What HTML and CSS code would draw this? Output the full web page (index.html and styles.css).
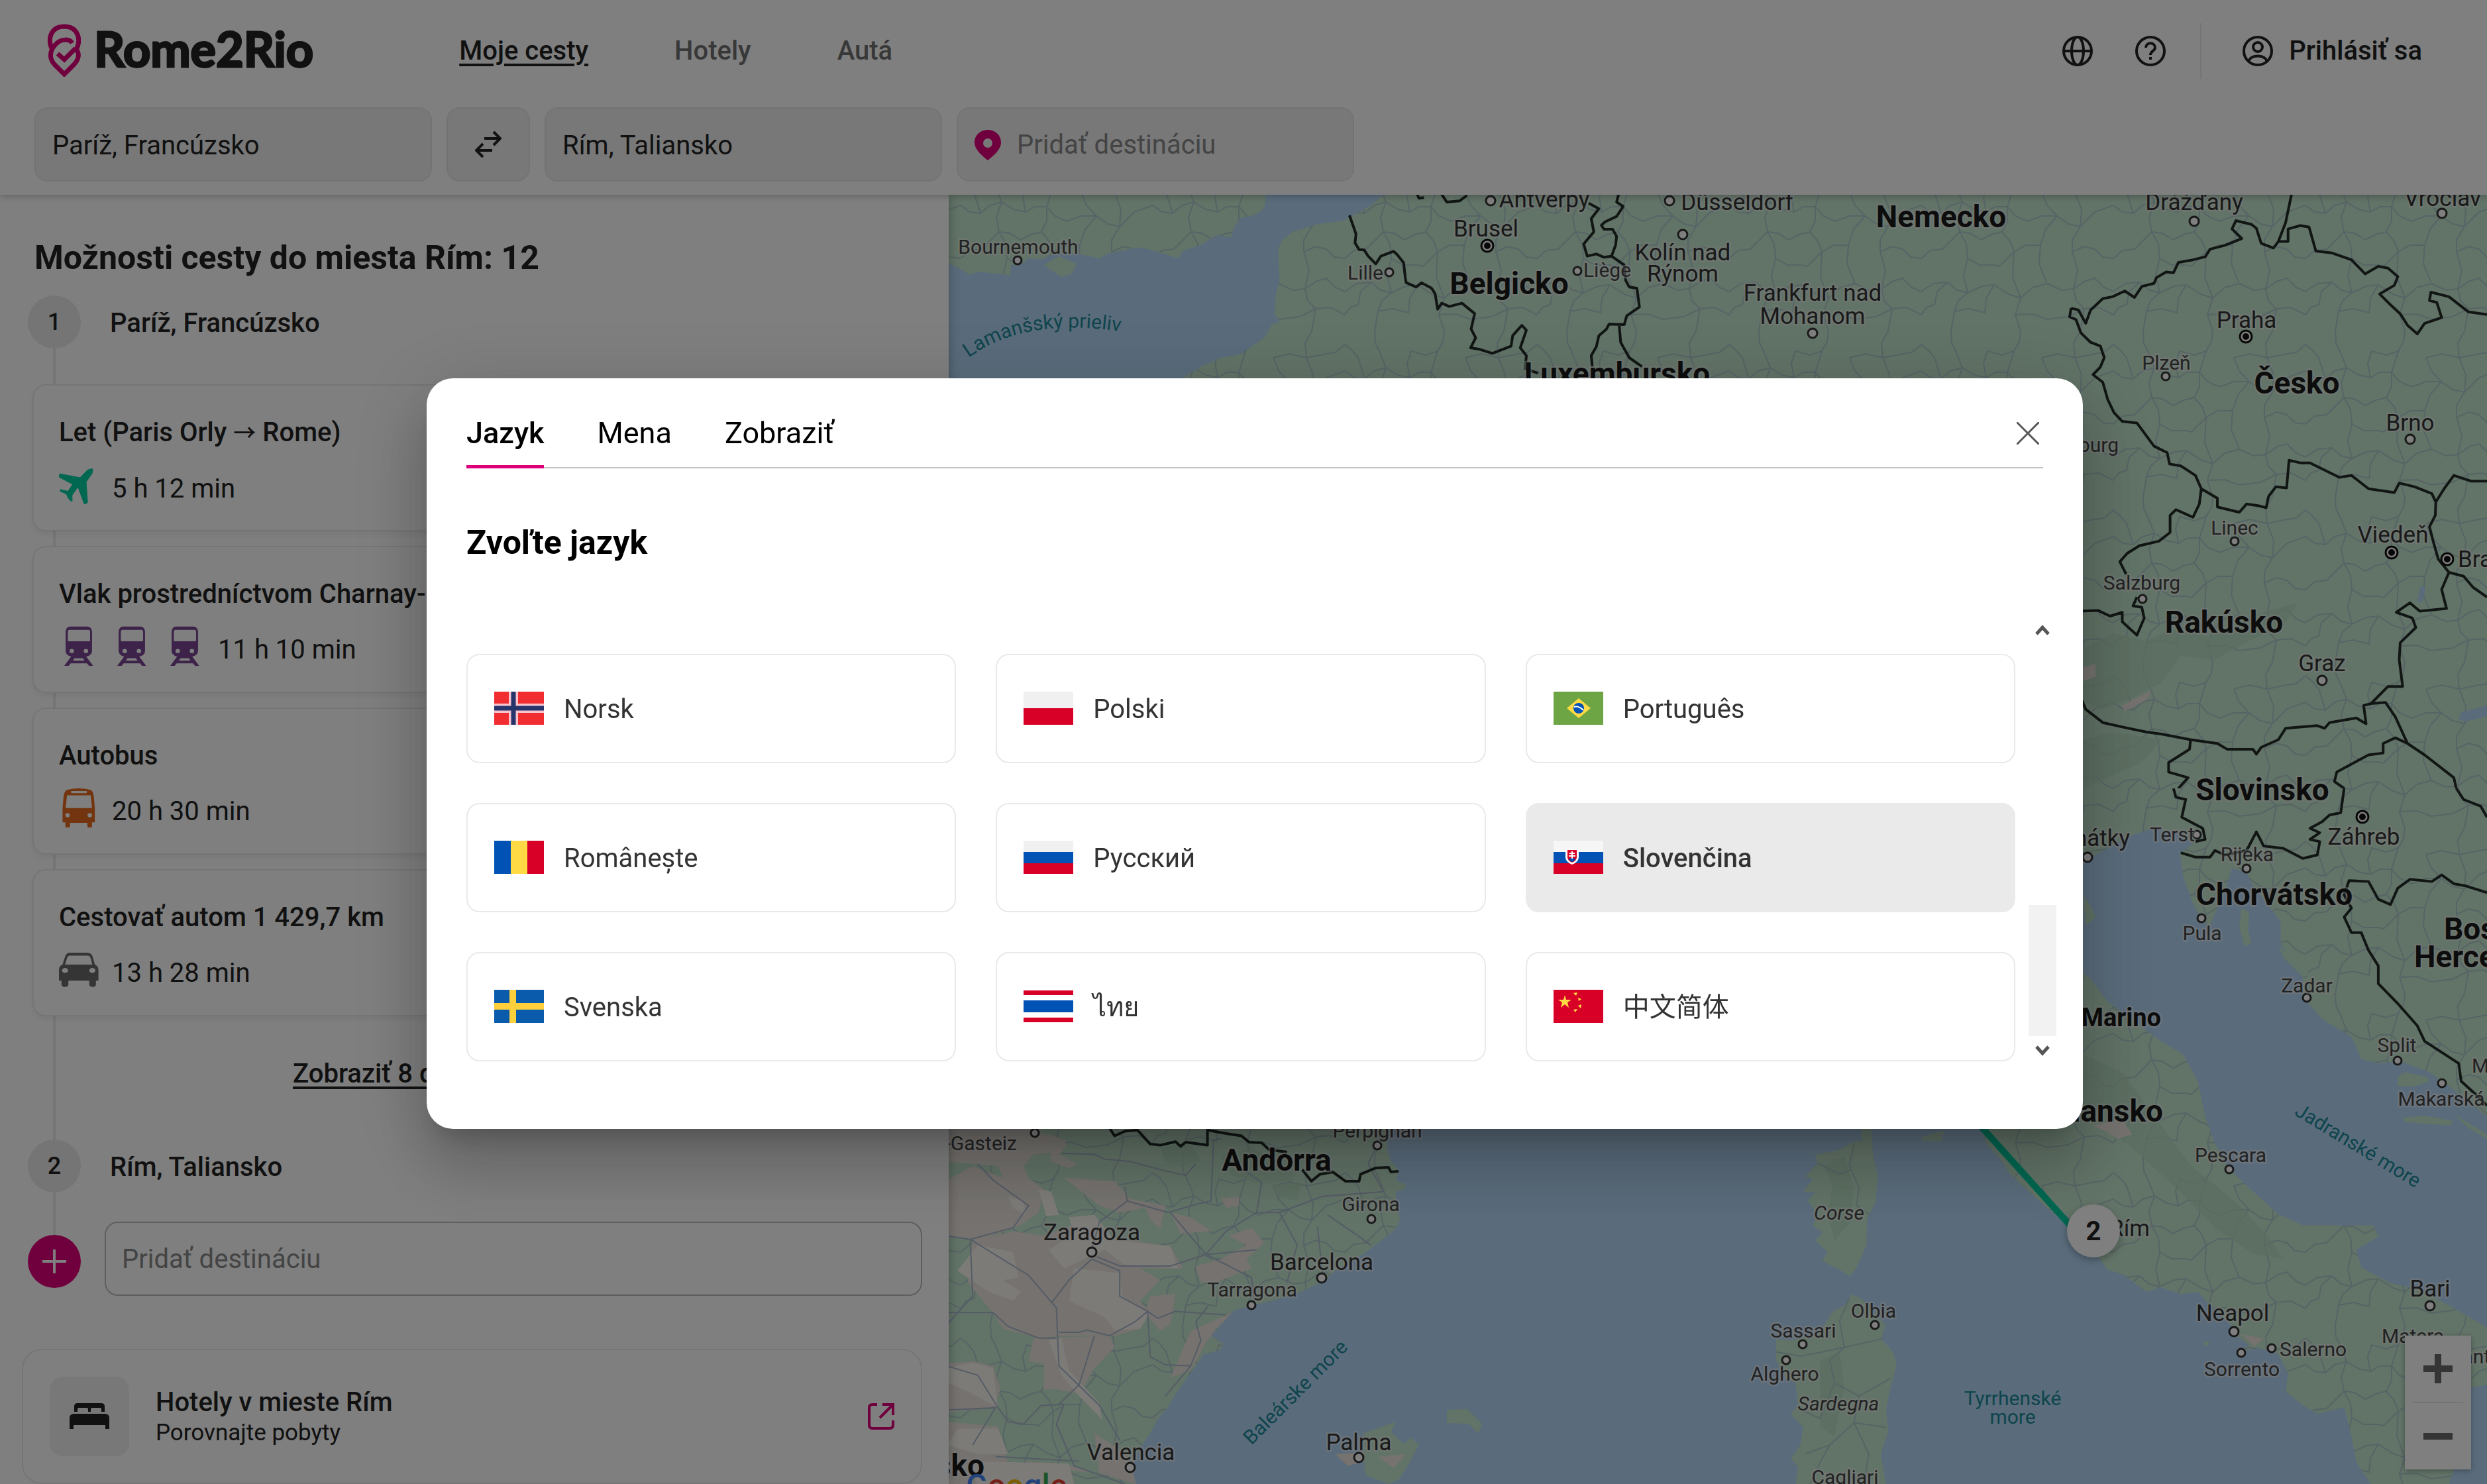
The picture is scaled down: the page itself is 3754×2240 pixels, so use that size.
FILE: index.html
```html
<!DOCTYPE html>
<html lang="sk">
<head>
<meta charset="utf-8">
<title>Rome2Rio</title>
<meta name="viewport" content="width=device-width, initial-scale=1">
<link rel="stylesheet" href="styles.css">
</head>
<body>
<svg class="sprite" aria-hidden="true">
  <symbol id="train" viewBox="214 604 143 94" preserveAspectRatio="none">
    <path fill-rule="evenodd" d="M252 605H318Q332 606 333 618V664Q331 674 312 676L337 698H322L315 692H256L249 698H233L258 676Q240 674 238 664V618Q239 606 252 605ZM250 613Q246 614 246 618V638Q246 640 250 640H322Q326 640 326 638V618Q326 614 322 613ZM260 658A8 5 0 1 0 260 668A8 5 0 1 0 260 658ZM311 658A8 5 0 1 0 311 668A8 5 0 1 0 311 658ZM270 680L264 686H306L300 680Z"/>
  </symbol>
</svg>

<div class="app">
  <header class="header">
    <div class="topbar">
      <a class="logo" href="#" aria-label="Rome2Rio">
        <svg width="50" height="80" viewBox="0 0 50 80" fill="none" stroke="currentColor" stroke-width="7">
          <path d="M7 39C-1 24 4 4 25 4S51 24 43 39"/>
          <path d="M37 29C33 22 21 23 14 29C2 40 2 52 10 61L25 76L40 61C48 52 48 45 43 38"/>
          <path d="M15 45L25 54L42 37"/>
        </svg>
        <span class="wordmark">Rome2Rio</span>
      </a>
      <nav class="nav">
        <a class="active" href="#">Moje cesty</a>
        <a href="#">Hotely</a>
        <a href="#">Autá</a>
      </nav>
      <div class="account">
        <button class="icon-btn" aria-label="Jazyk a mena">
          <svg width="46" height="46" viewBox="0 0 46 46" fill="none" stroke="currentColor" stroke-width="4"><circle cx="23" cy="23" r="21"/><ellipse cx="23" cy="23" rx="9" ry="21"/><path d="M2 23H44"/></svg>
        </button>
        <button class="icon-btn help" aria-label="Pomoc">
          <svg width="46" height="46" viewBox="0 0 46 46" fill="none" stroke="currentColor" stroke-width="4"><circle cx="23" cy="23" r="21"/><path d="M16 18C16 9 30 9 30 18C30 23 23 23 23 29M23 32V36"/></svg>
        </button>
        <button class="login">
          <svg width="46" height="46" viewBox="0 0 46 46" fill="none" stroke="currentColor" stroke-width="4"><circle cx="23" cy="23" r="21"/><circle cx="23" cy="17" r="7"/><path d="M9 38C14 28 32 28 37 38"/></svg>
          <span>Prihlásiť sa</span>
        </button>
      </div>
    </div>
    <form class="search">
      <input class="field" type="text" value="Paríž, Francúzsko" aria-label="Odkiaľ">
      <button class="swap" type="button" aria-label="Vymeniť">
        <svg width="40" height="40" viewBox="0 0 40 40" fill="none" stroke="currentColor" stroke-width="4"><path d="M14 11H37M28 1L38 11L28 21M26 29H3M12 19L2 29L12 39"/></svg>
      </button>
      <input class="field" type="text" value="Rím, Taliansko" aria-label="Kam">
      <label class="field with-pin">
        <svg width="40" height="46" viewBox="0 0 40 46"><path fill-rule="evenodd" d="M20 0C8 0 0 9 0 19C0 29 9 37 20 46C31 37 40 29 40 19C40 9 32 0 20 0ZM20 13A7 7 0 1 1 20 27A7 7 0 1 1 20 13Z" fill="currentColor"/></svg>
        <input type="text" placeholder="Pridať destináciu" aria-label="Pridať destináciu">
      </label>
    </form>
  </header>

  <main class="main">
    <section class="panel">
      <h1>Možnosti cesty do miesta Rím: 12</h1>
      <div class="timeline">
        <div class="stop"><span class="badge">1</span><span class="place">Paríž, Francúzsko</span></div>
        <div class="routes">
          <article class="route">
            <h2>Let (Paris Orly <span class="arrow">→</span> Rome)</h2>
            <div class="meta">
              <svg class="plane" viewBox="214 221 143 94" preserveAspectRatio="none"><path d="M336 230C330 228 320 230 312 235L290 250L218 241Q213 243 214 250L262 267L246 282L219 278L216 283L240 290L245 298L258 308L263 305L262 293L282 274L303 312Q310 316 318 309L313 261L330 245Q339 237 336 230Z"/></svg>
              <span>5 h 12 min</span>
            </div>
          </article>
          <article class="route">
            <h2>Vlak prostredníctvom Charnay-lès-Mâcon</h2>
            <div class="meta">
              <svg class="train"><use href="#train"/></svg>
              <svg class="train"><use href="#train"/></svg>
              <svg class="train"><use href="#train"/></svg>
              <span>11 h 10 min</span>
            </div>
          </article>
          <article class="route">
            <h2>Autobus</h2>
            <div class="meta">
              <svg class="bus" viewBox="214 986 143 94" preserveAspectRatio="none"><path fill-rule="evenodd" d="M243 991Q284 984 328 991Q338 994 340 1010L343 1035V1068H333V1077Q332 1081 325 1081Q316 1081 316 1077V1069H254V1077Q253 1081 246 1081Q237 1081 237 1077V1068H227V1035L230 1010Q232 994 243 991ZM258 994V999H314V994ZM243 1004L238 1034H333L328 1004ZM245 1046A8 5 0 1 0 245 1056A8 5 0 1 0 245 1046ZM325 1046A8 5 0 1 0 325 1056A8 5 0 1 0 325 1046Z"/></svg>
              <span>20 h 30 min</span>
            </div>
          </article>
          <article class="route">
            <h2>Cestovať autom 1 429,7 km</h2>
            <div class="meta">
              <svg class="car" viewBox="214 1369 143 94" preserveAspectRatio="none"><path fill-rule="evenodd" d="M250 1377H318Q332 1378 336 1388L343 1405Q356 1408 356 1418V1443H347V1452Q346 1458 336 1458Q324 1458 323 1452V1443H248V1452Q247 1458 236 1458Q224 1458 223 1452V1443H214V1418Q214 1408 227 1405L235 1388Q240 1378 250 1377ZM252 1384Q246 1384 243 1390L236 1405H334L328 1390Q325 1384 318 1384ZM236 1413A11 6 0 1 0 236 1425A11 6 0 1 0 236 1413ZM334 1413A11 6 0 1 0 334 1425A11 6 0 1 0 334 1413Z"/></svg>
              <span>13 h 28 min</span>
            </div>
          </article>
        </div>
        <a class="more" href="#">Zobraziť 8 ďalších možností</a>
        <div class="stop"><span class="badge">2</span><span class="place">Rím, Taliansko</span></div>
        <div class="add">
          <button class="plus" aria-label="Pridať">
            <svg width="36" height="36" viewBox="0 0 36 36" stroke="currentColor" stroke-width="4"><path d="M18 0V36M0 18H36"/></svg>
          </button>
          <input type="text" placeholder="Pridať destináciu" aria-label="Pridať destináciu">
        </div>
      </div>
      <a class="hotel" href="#">
        <span class="tile">
          <svg width="60" height="40" viewBox="0 0 60 40" fill="currentColor"><path d="M7 13V5Q7 0 12 0H48Q53 0 53 5V13H48V9Q48 7 46 7H34Q32 7 32 9V13H28V9Q28 7 26 7H14Q12 7 12 9V13ZM6 16H54Q60 17 60 22V39H54V33H6V39H0V22Q0 17 6 16Z"/></svg>
        </span>
        <span class="hotel-text"><strong>Hotely v mieste Rím</strong><small>Porovnajte pobyty</small></span>
        <svg class="ext" width="40" height="40" viewBox="0 0 40 40" fill="none" stroke="currentColor" stroke-width="4"><path d="M14 2H7Q2 2 2 7V33Q2 38 7 38H33Q38 38 38 33V26M22 2H38V18M38 2L18 22"/></svg>
      </a>
    </section>

    <section class="map" aria-label="Mapa">
      <svg class="map-canvas" viewBox="1432 294 2322 1946" preserveAspectRatio="xMinYMin slice">
        <defs>
          <pattern id="roads" width="290" height="250" patternUnits="userSpaceOnUse">
            <path class="road" d="M0 60L14 70L30 72L44 60L62 55L80 66L98 70L112 62L130 62L142 76L160 84L182 76L205 76L222 88L240 92L262 70L290 60M0 190L18 178L40 176L54 188L70 192L92 182L110 180L132 194L150 200L168 184L190 178L212 188L230 186L248 174L262 170L276 184L290 190M45 0L46 18L52 30L62 55L54 78L58 100L68 118L70 140L64 166L70 192L56 204L50 220L45 250M130 62L130 84L122 100L134 114L140 130L138 168L150 200L142 225L150 250M150 0L148 16L140 30L130 62M240 0L230 18L232 40L242 66L240 92L228 112L228 130L236 158L230 186L234 204L246 216L240 250M58 100L74 102L90 112L106 104L122 100M140 130L158 120L180 120L188 96L205 76M140 130L118 152L110 150L88 150L70 140M228 130L246 122L262 126L274 138L290 140M0 140L14 128L32 126L48 110L58 100M180 120L178 148L190 178M98 70L94 48L100 30L122 36L140 30M182 40L190 60L205 76M182 40L206 34L232 40M110 180L98 200L96 222L72 216L50 220M142 225L168 224L190 232L222 228L246 216M0 20L10 28L20 40L30 72M290 20L276 32L262 34L232 40M0 225L8 214L20 210L24 190L40 176M290 225L268 214L246 216"/>
          </pattern>
        </defs>
        <rect class="land" x="1432" y="294" width="2322" height="1946"/>
        <rect fill="url(#roads)" x="1432" y="294" width="2322" height="1946"/>

        <!-- Channel, Belgium, Luxembourg -->
        <svg x="1430" y="290" width="1200" height="290" viewBox="0 0 1568 870" preserveAspectRatio="none">
          <path class="sea" d="M627 0H866L835 60L800 105L780 130L730 145L680 180L660 220L652 260L655 400L648 460L645 550L655 585L640 600L625 660L600 700L575 735L540 750L500 790L465 840L460 870H0V320L20 340L45 375L60 360L100 370L125 378V330L145 330L160 300L185 305L200 290L220 280L260 280L300 300L315 280L375 250L400 260L455 300L465 265L500 240L530 195L560 205L565 160L580 115L600 110L620 85L627 60Z"/>
          <path class="land" d="M190 330L220 290L255 325L245 370L225 385Z"/>
          <path class="border" d="M793 105L800 150L806 190L804 230L812 260L822 262L830 290L845 325L855 290L880 268L888 285L900 320L903 385L905 410L925 430L935 410L955 435L962 460L967 530L975 503L990 518L1015 503L1040 550L1033 620L1042 660L1032 705L1050 712L1075 730L1112 697L1115 650L1133 603L1142 625L1130 705L1142 740L1140 800L1165 820M925 0L930 28L940 25M975 10L985 45L1010 40L1025 15M1265 50L1285 75L1270 120L1275 180L1255 235L1262 290L1280 280L1295 295L1310 290L1335 330L1338 400L1345 430L1360 435L1365 520L1340 560L1335 600L1305 598L1300 620L1285 650L1280 700L1270 740L1272 790M1325 600L1328 680L1345 750L1370 790M1325 0L1320 45L1333 65L1320 110L1297 135L1290 150L1295 168L1312 168L1320 200L1318 240L1310 290"/>
        </svg>

        <!-- Czechia, Austria -->
        <svg x="2600" y="290" width="1154" height="900" viewBox="0 0 1568 1568" preserveAspectRatio="none">
          <path class="hill" d="M740 1200L800 1160L870 1180L920 1150L1000 1170L1060 1130L1120 1100L1180 1080L1150 1140L1080 1180L1010 1230L940 1220L900 1290L840 1330L780 1360L740 1340ZM740 1440L800 1420L900 1440L860 1500L740 1568Z"/>
          <path class="sand" d="M740 1250L765 1240V1275L740 1285ZM820 1350L880 1310L870 1335L825 1365Z"/>
          <path class="sea" d="M1510 1385L1515 1368L1568 1350V1378L1525 1392ZM1432 1035L1442 1040L1435 1080L1425 1075Z"/>
          <path class="border" d="M1168 0L1155 80L1140 130M715 305L730 310L745 345L755 310L780 280L800 275L825 260L845 277L860 248L885 240L890 225L910 210L925 212L935 185L965 178L990 170L1000 150L1030 140L1065 122L1045 97L1053 75L1085 85L1095 95L1105 135L1130 147L1140 130L1160 130L1160 97L1185 88L1203 92L1217 155L1250 160L1290 178L1318 215L1345 195L1365 200L1385 222L1378 245L1348 268L1365 290L1390 320L1405 350L1425 373L1440 345L1475 330L1465 290L1450 285L1453 263L1490 275L1530 315L1568 322M715 305L712 328L725 335L735 370L755 395L775 405L783 435L775 460L760 480L780 500L790 545L803 580L820 603L850 607L885 668L912 685L917 715L940 720L970 745L982 780L1015 805L1015 828L1060 842L1075 820L1100 825L1115 830L1120 800L1135 775L1157 778L1162 705L1185 712L1205 712L1265 750L1290 745L1325 780L1378 790L1388 765L1420 775L1455 793L1463 815L1480 780L1500 745L1535 760L1568 760M1463 815L1462 850L1450 880L1458 920L1468 965L1490 1000L1520 1010L1540 1040L1568 1065M1490 1000L1475 1045L1485 1095L1430 1102L1410 1080L1382 1105L1415 1120L1422 1145L1390 1185L1388 1230L1395 1300L1365 1300L1330 1345L1360 1342L1380 1380L1405 1450L1440 1480L1500 1540L1505 1568M1330 1345L1315 1350L1320 1398L1300 1383L1245 1395L1235 1410L1220 1403L1155 1410L1140 1440L1105 1460L1095 1478L1088 1465L1035 1465L1015 1450L960 1440L900 1425L870 1420L825 1408L780 1395L745 1360L735 1330M982 780L978 820L965 855L930 835L918 850V895L895 918L855 930L830 950L815 972L828 1005M850 1065L842 1088L860 1092L865 1120L850 1165L820 1130V1105L795 1115L770 1100L730 1102M960 1440L958 1465L915 1500V1525L955 1540L935 1568M1405 1450L1380 1435L1355 1450V1475L1325 1480L1260 1525L1255 1550L1275 1568"/>
        </svg>

        <!-- Italy, Adriatic, Sardinia, Corsica -->
        <svg x="2600" y="1190" width="1154" height="1050" viewBox="0 0 1568 1568" preserveAspectRatio="none">
          <path class="hill" d="M740 600L820 640L900 760L960 850L1050 930L1120 1010L1150 1060L1090 1050L1010 990L930 900L850 820L780 760L740 740Z"/>
          <path class="sand" d="M760 760L820 745L840 780L810 790L790 775ZM1065 1230L1110 1240L1090 1258Z"/>
          <path class="sea" d="M700 190L740 170L765 150L790 135L830 110L880 90L940 100L965 125L938 145L945 200L965 260L985 300L1000 310L1015 270L1030 230L1045 180L1075 190L1085 215L1110 250L1145 300V350L1165 385L1190 420V470L1230 520L1290 560L1310 610L1345 620L1390 615L1450 640L1500 680L1568 740V1215L1490 1165L1430 1130L1370 1115L1310 1080L1300 1040L1345 1010L1335 985L1290 985H1190L1140 960L1110 930L1060 880L1035 850L1010 800L990 740L975 660L945 600L900 570L850 530L790 480L755 430L700 380ZM0 700H500L530 768L540 800L570 835L590 870L620 900L670 950L710 985L760 1040L790 1085L820 1095L870 1135L900 1125L940 1140L975 1135L1000 1165L1040 1205L1050 1230L1080 1255L1060 1270L1100 1262L1140 1275L1160 1320L1155 1360L1190 1390L1220 1410L1275 1395L1290 1460L1300 1520L1330 1568H0ZM1568 1345L1500 1355L1480 1400L1535 1480L1500 1535L1490 1568H1568Z"/>
          <path class="land" d="M285 760H305L308 820L318 870L315 930L297 970L295 1030L275 1080L262 1100L240 1085L205 1065L215 1045L190 1020L205 1000L185 985L195 960L175 930L190 910L165 910L185 880L170 875L195 845L190 825L240 815L270 795L285 795ZM265 1140L285 1150L310 1180L335 1210L325 1240L350 1270L357 1300L345 1350L335 1400L340 1450L325 1500L335 1568H150L155 1530L140 1510L160 1480L165 1440L140 1410L155 1390L150 1340L130 1330L110 1290V1240L140 1245L200 1225L225 1180L250 1165ZM410 785L455 770L450 795L410 795ZM1385 650L1400 640L1445 650L1450 660L1420 672L1385 670ZM1395 742L1440 738L1500 750L1490 760L1400 752ZM1065 270L1080 280L1078 320L1085 350L1070 355L1060 310ZM1140 355L1180 390L1205 420L1190 425L1150 380ZM740 240L755 265L765 290L745 310ZM985 1248L998 1246L996 1256L988 1256ZM1500 735L1568 780V790L1530 765Z"/>
          <path class="hill" d="M210 850L250 830L270 900L260 980L230 1020L215 960L225 900ZM200 1290L240 1270L250 1350L230 1460L200 1440Z"/>
          <path class="road" d="M270 800L260 850L280 900L275 940L300 960M195 845L240 870L262 860M260 1150L240 1200L250 1260L220 1290L230 1340L280 1370L270 1430L300 1500L290 1568M110 1270L160 1280L250 1260L330 1240M160 1400L200 1420L230 1340M170 1500L220 1480L270 1430L335 1440M345 1330L280 1370M180 1568L200 1520L220 1480"/>
          <path class="border" d="M925 0L930 20L950 25L942 65L985 90L990 115L970 120M940 145L970 155L1000 155L1010 140L1030 150L1075 140L1095 98L1110 130L1150 135L1190 158L1220 150L1225 120L1205 115L1225 100L1205 90L1230 75L1245 60L1268 55L1275 0M1505 0L1520 25L1555 40L1568 65M1568 235L1525 220L1500 215L1475 195L1455 210L1410 205L1385 225L1370 262L1345 250L1325 210L1285 208L1275 240L1290 270L1275 290L1290 325L1310 325L1325 365L1345 400V440L1385 485L1425 535L1440 570L1510 620L1515 660L1545 690L1568 715"/>
        </svg>

        <!-- Spain, Balearics -->
        <svg x="1430" y="1690" width="1200" height="550" viewBox="0 0 1568 1568" preserveAspectRatio="none">
          <path class="sand" d="M0 40H160L235 90L225 140L170 150L150 200L160 250L190 300L180 400L140 460L60 520L0 500V260L50 200L110 250L100 200L0 180ZM200 60L235 110L220 150L255 190L240 210L205 180ZM230 250L330 265L360 340L430 370L420 470L400 430L390 380L340 400L300 370ZM50 520L130 480L190 500L290 420L300 500L440 545L465 640L380 640L420 690L380 780L400 830L380 900L330 930L230 930L180 940L110 900L90 830L40 700ZM170 940L320 930L330 980L290 1070L260 1180L215 1160H190V1050L160 1040ZM0 1050L50 1040L90 1060L105 1160L90 1240L0 1260ZM0 1300L100 1320L110 1400L130 1568H0ZM490 630L540 600L590 540L555 500L600 465L625 530L590 600L600 640L530 700H500ZM570 820L530 900L510 960L480 1080L440 1110L480 910ZM290 1350L340 1420L370 1470L372 1568L300 1520ZM400 760L450 750L440 880L420 910L390 830ZM440 400L480 420L520 480L460 490ZM540 340L575 330V370L550 380ZM150 1470L230 1480L290 1520L200 1500Z"/>
          <path class="sand-light" d="M240 420L290 410L330 520L440 545L455 640L350 625L310 560L230 640L200 560L250 490ZM60 540L130 570L140 680L110 690L145 740L130 780L80 740L20 650ZM250 640L340 660L345 760L400 830L380 900L330 905L310 850L240 780ZM180 300L205 310L220 410L195 415ZM120 330L150 350L155 410L130 380ZM0 1070L50 1045L90 1070L100 1240L50 1180L0 1130ZM200 950L225 940L240 1080L300 1220L305 1290L260 1190L225 1100ZM20 1330L100 1330L120 1440L60 1440L0 1400ZM40 1470L240 1480L250 1568H60Z"/>
          <path class="hill" d="M420 120L480 100L500 180L460 200L430 180ZM540 160L600 120L640 170L700 180L680 260L620 280L560 240ZM640 280L700 270L690 350L650 330Z"/>
          <path class="road strong" d="M0 500L45 515L130 465L160 370L90 260L60 190M45 515L160 670L215 810L220 1060L300 1230L340 1380M45 515L50 760L0 880M285 600L340 650V760L395 825L400 1020L430 1055L480 1060M285 600L240 690L205 790M295 590L340 630H440L510 580L610 560M355 350L435 400L490 365L520 350L525 90L540 80M355 350L300 440L285 560M355 350L350 290M225 145L290 150L310 170L360 180L420 215L470 240L490 190M510 580L440 400M510 580L600 680L605 780M510 580L550 480L610 400L620 270L560 180M395 825L415 855L450 825L550 840M220 915H260L275 905L320 930L370 870L395 825M0 830H90L120 890L180 940H215M0 1060L60 1100L100 1240L120 1300L150 1310L185 1230L230 1225M230 1225L215 1310L250 1490L350 1568M0 1250L95 1240L50 1400M95 1450L260 1470M610 400H655L740 330L860 310M655 400L690 540L670 700M860 310L830 190L845 120M730 460L740 660M750 410L810 500L835 540M290 930L260 1140L220 1225M515 800L490 870L500 950L480 1060L430 1190"/>
          <path class="sea" d="M868 0V130L875 180L890 215L885 260L905 280L900 300L885 310V360L893 430L885 470L850 530L820 580L770 640L745 690L700 740L640 780L600 800L565 820L545 870L520 930L545 965L540 990L505 1010L490 1060L470 1120L445 1200L435 1240L415 1290L400 1350L375 1430L365 1500L372 1568H1568V0Z"/>
          <path class="land" d="M820 1440V1350L885 1300L875 1345L900 1395L915 1370L930 1400L905 1500L890 1550L870 1568L825 1530ZM985 1250L1025 1245L1055 1310L1047 1350L1030 1310L985 1305Z"/>
          <path class="sand" d="M765 1440L822 1430V1470L790 1490ZM850 1450L905 1440L880 1500Z"/>
          <path class="border" d="M315 20L330 70L350 50L375 45L400 105L420 110L450 95L460 115L470 97L513 110V45L550 60L580 70L595 97L620 100L635 130L670 140M700 215L718 265L735 235L760 225L785 265H812L815 235L845 208L870 205L875 225L890 222"/>
        </svg>

        <path class="flight" d="M2990 1700L3134 1860"/>

        <g class="dots">
          <circle cx="1536" cy="393" r="6"/><circle cx="2250" cy="303" r="7"/><circle cx="2520" cy="303" r="7"/><circle cx="2097" cy="411" r="6"/><circle cx="2381" cy="409" r="6"/><circle cx="2540" cy="354" r="7"/><circle cx="2736" cy="503" r="7"/><circle cx="3312" cy="334" r="7"/><circle cx="3686" cy="322" r="7"/><circle cx="3269" cy="568" r="6"/><circle cx="3638" cy="663" r="7"/><circle cx="3373" cy="817" r="6"/><circle cx="3234" cy="904" r="6"/><circle cx="3505" cy="1027" r="7"/><circle cx="3151" cy="1294" r="7"/><circle cx="3316" cy="1260" r="6"/><circle cx="3391" cy="1311" r="6"/><circle cx="3323" cy="1386" r="6"/><circle cx="3482" cy="1506" r="6"/><circle cx="3619" cy="1601" r="6"/><circle cx="3686" cy="1635" r="6"/><circle cx="3365" cy="1765" r="6"/><circle cx="2830" cy="2000" r="6"/><circle cx="2721" cy="2029" r="6"/><circle cx="2696" cy="2053" r="6"/><circle cx="3372" cy="2010" r="7"/><circle cx="3429" cy="2035" r="6"/><circle cx="3383" cy="2042" r="6"/><circle cx="3668" cy="1971" r="7"/><circle cx="1562" cy="1710" r="6"/><circle cx="2079" cy="1729" r="6"/><circle cx="2070" cy="1840" r="6"/><circle cx="1648" cy="1890" r="7"/><circle cx="1995" cy="1929" r="7"/><circle cx="1889" cy="1970" r="6"/><circle cx="2051" cy="2200" r="7"/><circle cx="1706" cy="2215" r="7"/>
        </g>
        <g class="capitals">
          <circle cx="2245" cy="371" r="9"/><circle cx="3390" cy="508" r="9"/><circle cx="3610" cy="834" r="9"/><circle cx="3694" cy="844" r="9"/><circle cx="3566" cy="1233" r="9"/>
        </g>
        <g class="cores">
          <circle cx="2245" cy="371" r="5"/><circle cx="3390" cy="508" r="5"/><circle cx="3610" cy="834" r="5"/><circle cx="3694" cy="844" r="5"/><circle cx="3566" cy="1233" r="5"/>
        </g>

        <g class="label country">
          <text x="2930" y="343">Nemecko</text><text x="2278" y="444">Belgicko</text><text x="2441" y="580">Luxembursko</text><text x="3467" y="594">Česko</text><text x="3357" y="955">Rakúsko</text><text x="3415" y="1208">Slovinsko</text><text x="3433" y="1366">Chorvátsko</text><text x="1927" y="1767">Andorra</text>
          <text class="start" x="3689" y="1418">Bosna a</text><text class="start" x="3644" y="1460">Hercegovina</text>
          <text class="end" x="3265" y="1693">Taliansko</text><text class="end" x="1486" y="2228">Španielsko</text>
          <text class="end small" x="3262" y="1549">San Marino</text>
        </g>
        <g class="label city">
          <text x="2331" y="313">Antverpy</text><text x="2622" y="317">Düsseldorf</text><text x="2243" y="357">Brusel</text><text x="2540" y="393">Kolín nad</text><text x="2540" y="425">Rýnom</text><text x="2736" y="454">Frankfurt nad</text><text x="2736" y="489">Mohanom</text><text x="3312" y="317">Drážďany</text><text x="3687" y="311">Vroclav</text><text x="3391" y="495">Praha</text><text x="3638" y="650">Brno</text><text x="3612" y="819">Viedeň</text><text class="start" x="3710" y="856">Bratislava</text><text x="3505" y="1013">Graz</text><text class="end" x="3215" y="1277">Benátky</text><text x="3568" y="1275">Záhreb</text><text class="end" x="3245" y="1866">Rím</text><text x="3370" y="1994">Neapol</text><text x="3668" y="1957">Bari</text><text x="1648" y="1872">Zaragoza</text><text x="1995" y="1917">Barcelona</text><text x="2051" y="2189">Palma</text><text x="1707" y="2204">Valencia</text>
        </g>
        <g class="label town">
          <text x="1537" y="383">Bournemouth</text><text x="2061" y="422">Lille</text><text x="2426" y="418">Liège</text><text x="3270" y="558">Plzeň</text><text class="end" x="3198" y="682">Regensburg</text><text x="3373" y="807">Linec</text><text x="3233" y="890">Salzburg</text><text class="start" x="3245" y="1270">Terst</text><text x="3392" y="1300">Rijeka</text><text x="3324" y="1419">Pula</text><text x="3482" y="1498">Zadar</text><text x="3618" y="1588">Split</text><text class="start" x="3731" y="1619">Mostar</text><text x="3685" y="1669">Makarská</text><text x="3367" y="1754">Pescara</text><text x="2828" y="1989">Olbia</text><text x="2722" y="2019">Sassari</text><text x="2694" y="2084">Alghero</text><text x="2785" y="2240">Cagliari</text><text class="start" x="3441" y="2047">Salerno</text><text x="3384" y="2077">Sorrento</text><text class="start" x="3595" y="2027">Matera</text><text class="end" x="3776" y="2058">Taranto</text><text class="end" x="1535" y="1736">Vitoria-Gasteiz</text><text x="2079" y="1717">Perpignan</text><text x="2069" y="1828">Girona</text><text x="1890" y="1957">Tarragona</text>
          <text class="italic" x="2776" y="1841">Corse</text><text class="italic" x="2775" y="2129">Sardegna</text>
        </g>
        <g class="water">
          <path id="channel" fill="none" d="M1462 540Q1550 476 1700 502"/>
          <path id="balearic" fill="none" d="M1889 2182L2060 2011"/>
          <path id="adriatic" fill="none" d="M3462 1682L3700 1826"/>
          <text><textPath href="#channel">Lamanšský prieliv</textPath></text>
          <text><textPath href="#balearic">Baleárske more</textPath></text>
          <text><textPath href="#adriatic">Jadranské more</textPath></text>
          <text class="mid" x="3038" y="2121">Tyrrhenské</text><text class="mid" x="3038" y="2149">more</text>
        </g>
        <text class="google" x="1458" y="2259"><tspan fill="#4285f4">G</tspan><tspan fill="#ea4335">o</tspan><tspan fill="#fbbc05">o</tspan><tspan fill="#4285f4">g</tspan><tspan fill="#34a853">l</tspan><tspan fill="#ea4335">e</tspan></text>
        <circle class="marker" cx="3160" cy="1858" r="40"/>
        <text class="marker-text" x="3160" y="1872">2</text>
      </svg>
      <div class="zoom">
        <button aria-label="Priblížiť"><svg width="44" height="44" viewBox="0 0 44 44" stroke="currentColor" stroke-width="10"><path d="M22 0V44M0 22H44"/></svg></button>
        <button aria-label="Oddialiť"><svg width="44" height="44" viewBox="0 0 44 44" stroke="currentColor" stroke-width="10"><path d="M0 22H44"/></svg></button>
      </div>
    </section>
  </main>
</div>

<div class="overlay">
  <div class="modal" role="dialog" aria-modal="true" aria-labelledby="lang-title">
    <div class="tabs">
      <button class="tab selected">Jazyk</button>
      <button class="tab">Mena</button>
      <button class="tab">Zobraziť</button>
      <button class="close" aria-label="Zavrieť"><svg width="34" height="34" viewBox="0 0 34 34" stroke="currentColor" stroke-width="3"><path d="M0 0L34 34M34 0L0 34"/></svg></button>
    </div>
    <h2 class="modal-title" id="lang-title">Zvoľte jazyk</h2>
    <div class="list">
      <div class="langs">
        <button class="lang"><svg class="flag" viewBox="0 0 75 50"><path fill="#f12d32" d="M0 0H75V50H0Z"/><path stroke="#f7c4cd" stroke-width="14" d="M0 25H75M29 0V50"/><path stroke="#27336b" stroke-width="7" d="M0 25H75M29 0V50"/></svg><span>Norsk</span></button>
        <button class="lang"><svg class="flag" viewBox="0 0 75 50"><path fill="#f0f0f0" d="M0 0H75V25H0Z"/><path fill="#d80027" d="M0 25H75V50H0Z"/></svg><span>Polski</span></button>
        <button class="lang"><svg class="flag" viewBox="0 0 75 50"><path fill="#6da544" d="M0 0H75V50H0Z"/><path fill="#ffda44" d="M38 10L56 25L38 40L20 25Z"/><circle cx="38" cy="25" r="8" fill="#0052b4"/><path d="M31 23Q38 21 45 28" stroke="#fff" stroke-width="2" fill="none"/></svg><span>Português</span></button>
        <button class="lang"><svg class="flag" viewBox="0 0 75 50"><path fill="#0052b4" d="M0 0H25V50H0Z"/><path fill="#ffda44" d="M25 0H50V50H25Z"/><path fill="#d80027" d="M50 0H75V50H50Z"/></svg><span>Românește</span></button>
        <button class="lang"><svg class="flag" viewBox="0 0 75 50"><path fill="#f0f0f0" d="M0 0H75V17H0Z"/><path fill="#0052b4" d="M0 17H75V34H0Z"/><path fill="#d80027" d="M0 34H75V50H0Z"/></svg><span>Русский</span></button>
        <button class="lang current" aria-pressed="true"><svg class="flag" viewBox="0 0 75 50"><path fill="#f6f6f6" d="M0 0H75V17H0Z"/><path fill="#0052b4" d="M0 17H75V34H0Z"/><path fill="#d80027" d="M0 34H75V50H0Z"/><path fill="#fff" d="M18 13H38V25Q38 32 28 36Q18 32 18 25Z"/><path fill="#d80027" d="M21 14H35V25Q35 30 28 33Q21 30 21 25Z"/><path fill="#0052b4" d="M23 28Q28 24 33 28Q31 31 28 32Q25 31 23 28Z"/><path stroke="#fff" stroke-width="2" d="M28 16V27M24 19H32M23 23H33"/></svg><span>Slovenčina</span></button>
        <button class="lang"><svg class="flag" viewBox="0 0 75 50"><path fill="#0a5bab" d="M0 0H75V50H0Z"/><path stroke="#ffcf3c" stroke-width="10" d="M0 25H75M28 0V50"/></svg><span>Svenska</span></button>
        <button class="lang"><svg class="flag" viewBox="0 0 75 50"><path fill="#fff" d="M0 0H75V50H0Z"/><path fill="#d80027" d="M0 1H75V8H0ZM0 42H75V49H0Z"/><path fill="#0052b4" d="M0 16H75V34H0Z"/></svg><span>ไทย</span></button>
        <button class="lang"><svg class="flag" viewBox="0 0 75 50"><path fill="#d80027" d="M0 0H75V50H0Z"/><path fill="#ffda44" d="M17 8L19 15H27L21 19L23 27L17 22L11 27L13 19L7 15H15ZM30 5L36 4L34 9ZM37 12L42 14L38 17ZM37 24L42 22L41 28ZM30 30L36 29L33 34Z"/></svg><span>中文简体</span></button>
      </div>
      <div class="scrollbar" aria-hidden="true">
        <svg width="22" height="16" viewBox="0 0 22 16" fill="none" stroke="currentColor" stroke-width="5"><path d="M2 14L11 4L20 14"/></svg>
        <span class="thumb"></span>
        <svg width="22" height="16" viewBox="0 0 22 16" fill="none" stroke="currentColor" stroke-width="5"><path d="M2 2L11 12L20 2"/></svg>
      </div>
    </div>
  </div>
</div>
</body>
</html>
```
FILE: styles.css
```css
* { box-sizing: border-box; }

body {
  margin: 0;
  font: 400 40px/60px Roboto, "Noto Sans CJK SC", "Noto Sans", sans-serif;
  color: #222;
  background: #fff;
}

button, input { font: inherit; color: inherit; }
button { border: 0; background: none; padding: 0; cursor: pointer; }
a { color: inherit; text-decoration: none; }
svg { display: block; flex: none; }
.sprite { position: absolute; width: 0; height: 0; }

.app { display: flex; flex-direction: column; height: 100vh; overflow: hidden; }

/* Header */
.header { position: relative; z-index: 2; padding-bottom: 20px; background: #fff; box-shadow: 0 2px 10px rgba(0, 0, 0, .25); }
.topbar { display: flex; align-items: center; height: 152px; margin-bottom: 10px; padding: 0 98px 0 72px; }
.logo { display: flex; align-items: center; gap: 20px; color: #de007b; }
.wordmark { padding-bottom: 6px; font: 700 72px/80px Lato, sans-serif; color: #222; -webkit-text-stroke: 3px #222; }
.nav { display: flex; gap: 130px; margin-left: 220px; padding-top: 2px; font-weight: 500; color: #717171; }
.nav .active { color: #222; text-decoration: underline; text-underline-offset: 6px; }
.account { display: flex; align-items: center; gap: 64px; margin-left: auto; padding-top: 2px; }
.help { height: 84px; margin-right: -12px; }
.login { display: flex; align-items: center; gap: 24px; height: 84px; padding-left: 62px; border-left: 2px solid #ebebeb; font-weight: 500; }

.search { display: flex; gap: 22px; padding: 0 52px; }
.field { width: 600px; height: 112px; padding: 2px 25px 0; border: 2px solid #e6e6e6; border-radius: 20px; background: #f1f1f1; }
.with-pin { display: flex; align-items: center; gap: 24px; color: #de007b; }
.with-pin input { flex: 1; min-width: 0; border: 0; padding: 0; background: none; color: #222; }
.swap { display: flex; align-items: center; justify-content: center; width: 126px; border: 2px solid #e6e6e6; border-radius: 20px; background: #f1f1f1; }
::placeholder { color: #888; opacity: 1; }

.main { display: grid; grid-template-columns: 1432px minmax(0, 1fr); flex: 1; min-height: 0; }

/* Side panel */
.panel { position: relative; z-index: 1; padding: 65px 40px 0 0; background: #fff; box-shadow: 0 0 16px rgba(0, 0, 0, .3); }
.panel h1 { margin: 0 0 27px 52px; font-size: 50px; line-height: 60px; font-weight: 700; }
.timeline { position: relative; isolation: isolate; }
.timeline::before { content: ""; position: absolute; z-index: -1; left: 80px; top: 40px; bottom: 50px; width: 4px; background: #ebebeb; }
.stop { display: flex; align-items: center; gap: 44px; height: 80px; padding-left: 42px; font-weight: 500; }
.place { padding-top: 4px; }
.badge { width: 80px; height: 80px; border-radius: 50%; background: #ebebeb; font-size: 36px; line-height: 80px; text-align: center; }
.routes { display: grid; gap: 22px; margin: 54px 0 57px 49px; }
.route { height: 222px; padding: 41px 38px 0; border: 2px solid #ebebeb; border-radius: 20px; background: #fff; box-shadow: 0 5px 10px rgba(0, 0, 0, .06); overflow: hidden; }
.route h2 { margin: 0 0 18px; font-size: 40px; line-height: 60px; font-weight: 500; white-space: nowrap; }
.arrow { font-size: 34px; }
.meta { display: flex; align-items: center; gap: 20px; height: 68px; }
.meta svg { align-self: flex-start; width: 60px; height: 60px; }
.meta span { padding-top: 4px; }
.plane { fill: #00cfa2; }
.train { fill: #7a4593; }
.bus { fill: #e66a1f; }
.car { fill: #6a6a6a; }
.more { display: block; margin: 0 0 69px 442px; font-weight: 500; text-decoration: underline; text-underline-offset: 6px; }
.add { display: flex; gap: 36px; margin-top: 44px; padding-left: 42px; }
.plus { display: flex; align-items: center; justify-content: center; align-self: flex-end; width: 80px; height: 80px; margin-bottom: 12px; border-radius: 50%; background: #de007b; color: #fff; }
.add input { flex: 1; min-width: 0; height: 112px; padding: 0 24px; border: 2px solid #bcbcbc; border-radius: 20px; background: #fff; }
.hotel { display: flex; align-items: center; gap: 40px; margin: 80px 0 0 33px; padding: 40px; border: 2px solid #ebebeb; border-radius: 30px; }
.tile { display: flex; align-items: center; justify-content: center; width: 120px; height: 120px; border-radius: 20px; background: #f1f1f1; }
.hotel-text { display: grid; padding-top: 4px; line-height: 46px; }
.hotel-text strong { font-weight: 500; }
.hotel-text small { font-size: 35px; }
.ext { margin-left: auto; color: #de007b; }

/* Map */
.map { position: relative; min-height: 0; background: #b4d8f8; overflow: hidden; }
.map-canvas { width: 100%; height: 100%; }
.land { fill: #c4e6ce; }
.sea { fill: #b4d8f8; }
.sand { fill: #ebe5de; }
.sand-light { fill: #fbf7f0; }
.hill { fill: #b6dac0; opacity: .7; }
.road, .border { fill: none; vector-effect: non-scaling-stroke; }
.road { stroke: #aec8cc; stroke-width: 2px; }
.strong { stroke: #a9b8cc; }
.border { stroke: #222c28; stroke-width: 4px; stroke-linejoin: round; }
.flight { stroke: #00cfa2; stroke-width: 10px; }
.label { text-anchor: middle; fill: #333; paint-order: stroke; stroke: #f4f4f4; stroke-opacity: .5; stroke-width: 5px; stroke-linejoin: round; }
.country { font-size: 46px; font-weight: 700; fill: #1a1a1a; }
.country .small { font-size: 38px; }
.city { font-size: 35px; }
.town { font-size: 30px; fill: #444; }
.italic { font-style: italic; }
.start { text-anchor: start; }
.end { text-anchor: end; }
.mid { text-anchor: middle; }
.water { font-size: 30px; fill: #1d8a98; }
.dots { fill: #fff; stroke: #333; stroke-width: 3px; }
.capitals { fill: #fff; stroke: #111; stroke-width: 3px; }
.cores { fill: #111; }
.google { font-size: 48px; font-weight: 500; }
.marker { fill: #fff; filter: drop-shadow(0 4px 6px rgba(0, 0, 0, .3)); }
.marker-text { font-size: 40px; font-weight: 700; text-anchor: middle; fill: #222; }
.zoom { position: absolute; right: 24px; bottom: 22px; width: 100px; padding: 0 12px; background: #fff; color: #6a6a6a; box-shadow: 0 2px 8px rgba(0, 0, 0, .3); }
.zoom button { display: flex; align-items: center; justify-content: center; width: 100%; height: 100px; }
.zoom button + button { height: 102px; border-top: 2px solid #e6e6e6; }

/* Language dialog */
.overlay { position: fixed; inset: 0; z-index: 10; display: flex; align-items: center; justify-content: center; padding: 34px 0 0 34px; background: rgba(0, 0, 0, .5); }
.modal {
  width: 2500px; max-width: 100%; padding: 32px 60px 92px; border-radius: 40px; background: #fff; color: #000;
  box-shadow: 0 28px 38px -18px rgba(0, 0, 0, .2), 0 60px 95px 8px rgba(0, 0, 0, .14), 0 22px 115px 20px rgba(0, 0, 0, .12);
}
.tabs { display: flex; gap: 80px; height: 104px; border-bottom: 2px solid #c4c4c4; }
.tab { height: 104px; padding-top: 4px; border-bottom: 5px solid transparent; font-size: 45px; }
.tab.selected { border-color: #de007b; font-weight: 500; }
.close { margin: 0 6px 0 auto; color: #555; }
.modal-title { margin: 82px 0 76px; font-size: 50px; line-height: 60px; font-weight: 700; }
.list { display: flex; gap: 20px; margin-right: -20px; color: #333; }
.langs { display: grid; grid-template-columns: repeat(3, 1fr); gap: 60px; flex: 1; padding: 62px 0 10px; }
.lang { display: flex; align-items: center; gap: 30px; height: 165px; padding: 0 40px; border: 2px solid #e9e9e9; border-radius: 20px; }
.lang span { padding-top: 4px; }
.lang.current { border-color: #eaeaea; background: #eaeaea; font-weight: 500; }
.flag { width: 75px; height: 50px; }
.scrollbar { display: flex; flex-direction: column; align-items: center; width: 42px; padding: 18px 0; color: #555; }
.thumb { width: 42px; height: 198px; margin: auto 0 14px; background: #f2f2f2; }
```
